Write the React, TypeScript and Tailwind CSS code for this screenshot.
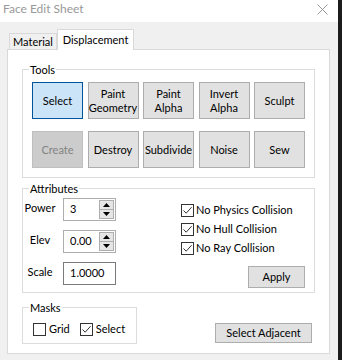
import React from 'react';

// Face Edit Sheet — classic Win32 property sheet look

const font = "font-['Lato',sans-serif] text-[11px] text-black";

function Btn({ children, active = false, disabled = false, className = '' }: { children: React.ReactNode; active?: boolean; disabled?: boolean; className?: string }) {
  const tone = active
    ? 'bg-[#cce4f7] border-[#005499] text-black'
    : disabled
      ? 'bg-[#cccccc] border-[#bfbfbf] text-[#838383]'
      : 'bg-[#e1e1e1] border-[#adadad] text-black';
  return (
    <div className={`flex items-center justify-center text-center leading-[14px] border ${tone} ${className}`}>
      {children}
    </div>
  );
}

function Check({ checked }: { checked: boolean }) {
  return (
    <div className="w-[13px] h-[13px] border border-[#333333] bg-white flex items-center justify-center shrink-0">
      {checked && (
        <svg width="11" height="11" viewBox="0 0 11 11">
          <path d="M1.5 5.5 L4.2 8.2 L9.6 2.2" fill="none" stroke="#333333" strokeWidth="1" />
        </svg>
      )}
    </div>
  );
}

function Spin({ value }: { value: string }) {
  return (
    <div className="w-[53px] h-[23px] border border-[#adadad] bg-white flex items-center pl-[6px] pr-[1px]">
      <span className="flex-1">{value}</span>
      <div className="flex flex-col w-[15px] h-[19px] border border-[#adadad] bg-[#e6e6e6]">
        <div className="flex-1 flex items-center justify-center border-b border-[#adadad]">
          <svg width="7" height="4" viewBox="0 0 7 4"><path d="M0 4 L3.5 0 L7 4 Z" fill="#000" /></svg>
        </div>
        <div className="flex-1 flex items-center justify-center">
          <svg width="7" height="4" viewBox="0 0 7 4"><path d="M0 0 L3.5 4 L7 0 Z" fill="#000" /></svg>
        </div>
      </div>
    </div>
  );
}

export default function App() {
  const tools: { label: React.ReactNode; active?: boolean; disabled?: boolean }[] = [
    { label: 'Select', active: true },
    { label: <>Paint<br />Geometry</> },
    { label: <>Paint<br />Alpha</> },
    { label: <>Invert<br />Alpha</> },
    { label: 'Sculpt' },
    { label: 'Create', disabled: true },
    { label: 'Destroy' },
    { label: 'Subdivide' },
    { label: 'Noise' },
    { label: 'Sew' },
  ];

  return (
    <div className={`w-[342px] h-[360px] flex overflow-hidden ${font}`}>
      <div className="w-[338px] h-full flex flex-col bg-[#f0f0f0]">
        {/* title bar */}
        <div className="h-[22px] bg-white flex items-center justify-between pl-[3px] pr-[10px]">
          <span className="text-[12px] text-[#999999] leading-none -mt-[4px]">Face Edit Sheet</span>
          <svg width="11" height="11" viewBox="0 0 11 11" className="-mt-[4px]">
            <path d="M0.5 0.5 L10.5 10.5 M10.5 0.5 L0.5 10.5" stroke="#999999" strokeWidth="1" />
          </svg>
        </div>

        <div className="flex-1 px-[7px] pt-[7px]">
          {/* tabs */}
          <div className="flex items-end h-[20px] pl-[2px]">
            <div className="w-[48px] h-[16px] border border-b-0 border-[#d9d9d9] bg-[#f0f0f0] flex items-center justify-center leading-none">Material</div>
            <div className="relative z-10 w-[77px] h-[21px] -mb-px border border-b-0 border-[#d9d9d9] bg-white flex items-center justify-center leading-none pb-[2px]">Displacement</div>
          </div>

          {/* panel */}
          <div className="w-[323px] h-[305px] border border-[#d9d9d9] bg-white pl-[14px] pt-[12px]">
            <fieldset className="w-[293px] border border-[#dcdcdc]">
              <legend className="ml-[6px] px-[1px] leading-[15px]">Tools</legend>
              <div className="grid grid-cols-[repeat(5,51px)] gap-x-[4.5px] gap-y-[12px] pl-[9px] pt-[5px] pb-[9px]">
                {tools.map((t, i) => (
                  <Btn key={i} active={t.active} disabled={t.disabled} className="h-[37px]">{t.label}</Btn>
                ))}
              </div>
            </fieldset>

            <fieldset className="mt-[3px] w-[293px] h-[112px] border border-[#dcdcdc]">
              <legend className="ml-[6px] px-[1px] leading-[15px]">Attributes</legend>
              <div className="flex w-full pt-[2px]">
                <div className="flex flex-col gap-[9px] w-[150px]">
                  {[
                    { l: 'Power', c: <Spin value="3" /> },
                    { l: 'Elev', c: <Spin value="0.00" /> },
                    {
                      l: 'Scale',
                      c: <div className="w-[53px] h-[23px] border border-[#7a7a7a] bg-white flex items-center pl-[6px]">1.0000</div>,
                    },
                  ].map((r) => (
                    <div key={r.l} className="flex items-start">
                      <span className="w-[34px] text-center leading-[15px] mt-[2px]">{r.l}</span>
                      <div className="ml-[6px]">{r.c}</div>
                    </div>
                  ))}
                </div>
                <div className="flex flex-col pl-[8px] pt-[3px]">
                  {['No Physics Collision', 'No Hull Collision', 'No Ray Collision'].map((t) => (
                    <div key={t} className="flex items-center gap-[2px] h-[19px]">
                      <Check checked />
                      <span>{t}</span>
                    </div>
                  ))}
                  <Btn className="mt-[8px] ml-[67px] w-[57px] h-[22px]">Apply</Btn>
                </div>
              </div>
            </fieldset>

            <div className="flex items-end mt-[7px]">
              <fieldset className="w-[115px] border border-[#dcdcdc]">
                <legend className="ml-[6px] px-[1px] leading-[15px]">Masks</legend>
                <div className="flex items-center pl-[10px] pt-[6px] pb-[5px]">
                  <Check checked={false} />
                  <span className="ml-[3px]">Grid</span>
                  <div className="ml-[10px]"><Check checked /></div>
                  <span className="ml-[3px]">Select</span>
                </div>
              </fieldset>
              <Btn className="ml-[78px] mb-[1px] w-[97px] h-[20px]">Select Adjacent</Btn>
            </div>
          </div>
        </div>
      </div>
      <div className="w-[4px] h-full bg-[#1c1c1c]" />
    </div>
  );
}
